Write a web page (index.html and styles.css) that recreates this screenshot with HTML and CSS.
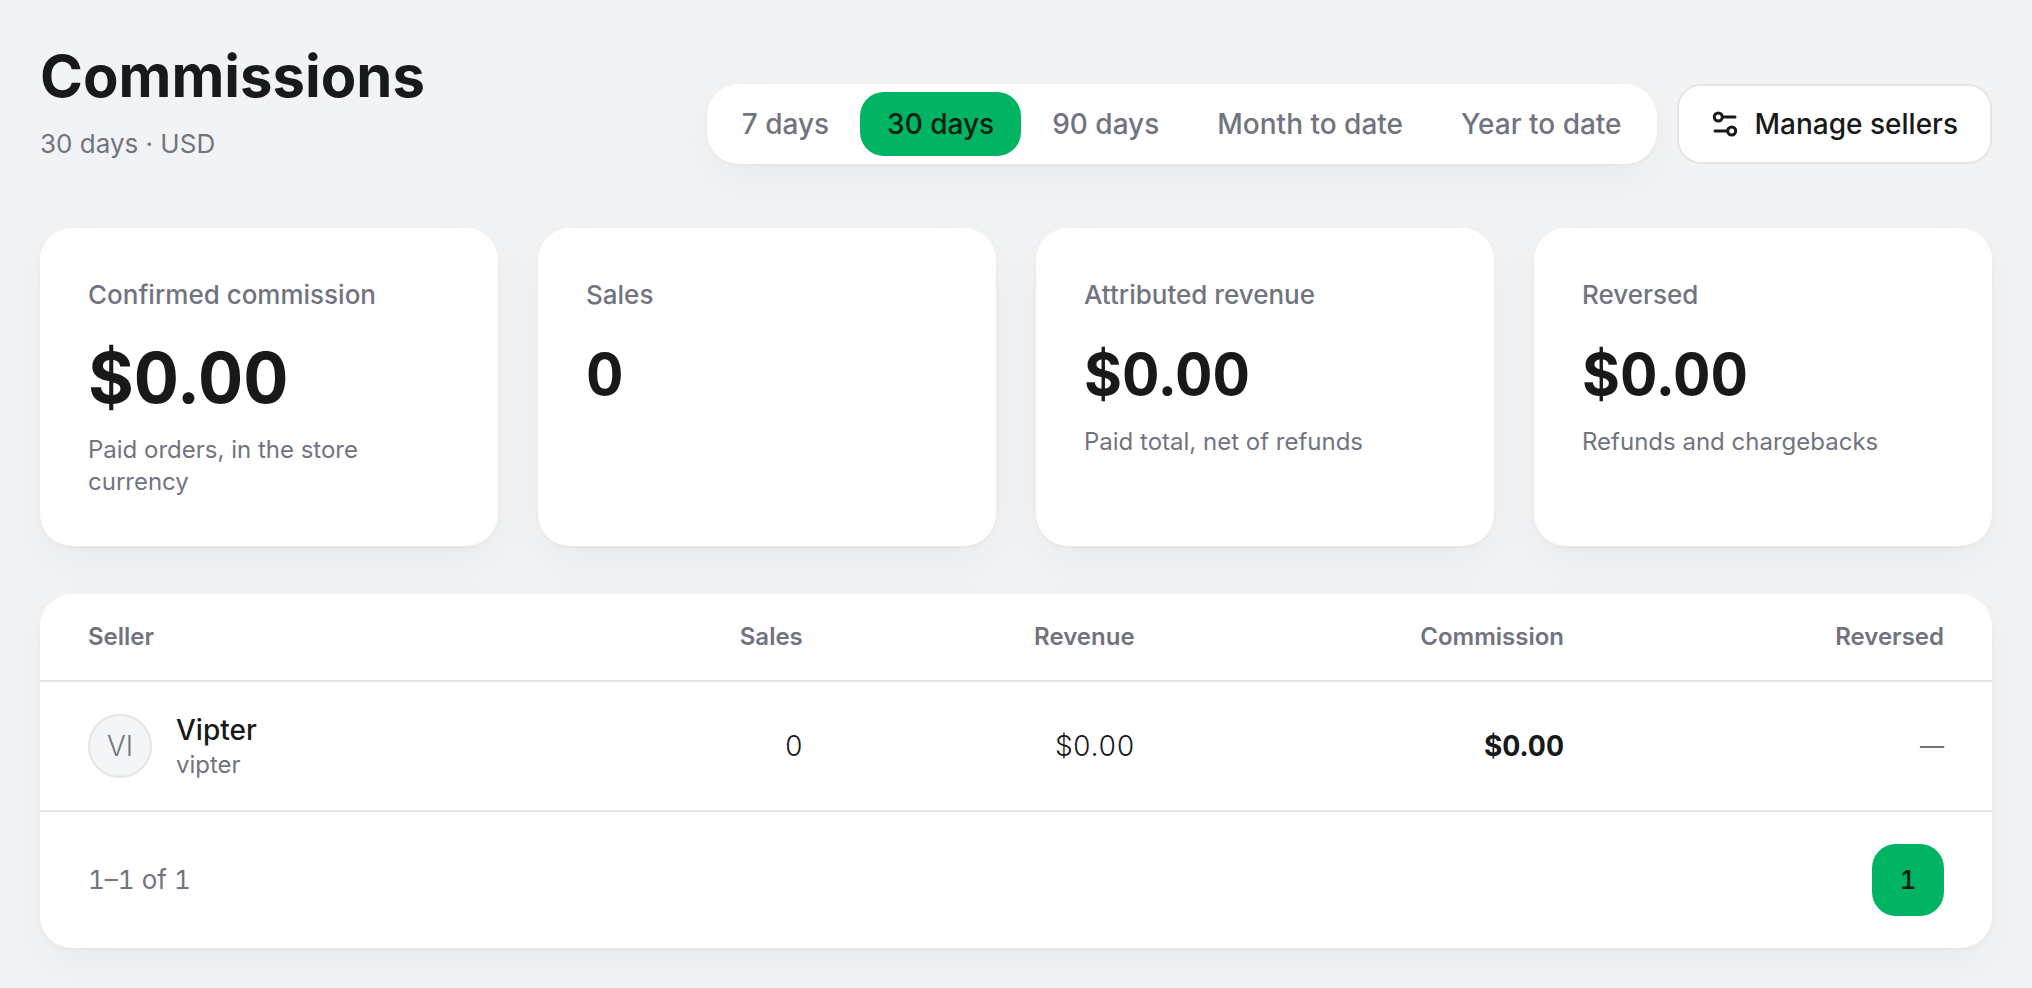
FILE: index.html
```html
<!DOCTYPE html>
<html lang="en">
<head>
    <meta charset="UTF-8">
    <meta name="viewport" content="width=device-width, initial-scale=1.0">
    <title>Commissions</title>
    <link rel="stylesheet" href="styles.css">
</head>

<body>

    <main class="page">
        <header class="page-header">
            <div class="page-title">
                <h1>Commissions</h1>
                <p>30 days · USD</p>
            </div>
            <div class="actions">
                <nav class="periods" aria-label="Period">
                    <button type="button">7 days</button>
                    <button type="button" class="active" aria-pressed="true">30 days</button>
                    <button type="button">90 days</button>
                    <button type="button">Month to date</button>
                    <button type="button">Year to date</button>
                </nav>
                <a class="manage" href="#sellers">
                    <svg class="icon" viewBox="0 0 28 28" aria-hidden="true">
                        <circle cx="7.3" cy="7" r="4" />
                        <path d="M11.5 7H24" />
                        <circle cx="20.7" cy="21" r="4" />
                        <path d="M4 21H16.5" />
                    </svg>
                    Manage sellers
                </a>
            </div>
        </header>

        <section class="stats">
            <article class="card stat stat-main">
                <h2>Confirmed commission</h2>
                <p class="value">$0.00</p>
                <p class="hint">Paid orders, in the store currency</p>
            </article>
            <article class="card stat">
                <h2>Sales</h2>
                <p class="value">0</p>
            </article>
            <article class="card stat">
                <h2>Attributed revenue</h2>
                <p class="value">$0.00</p>
                <p class="hint">Paid total, net of refunds</p>
            </article>
            <article class="card stat">
                <h2>Reversed</h2>
                <p class="value">$0.00</p>
                <p class="hint">Refunds and chargebacks</p>
            </article>
        </section>

        <section class="card" id="sellers">
            <table class="sellers">
                <thead>
                    <tr>
                        <th class="col-seller" scope="col">Seller</th>
                        <th class="col-sales" scope="col">Sales</th>
                        <th class="col-revenue" scope="col">Revenue</th>
                        <th class="col-commission" scope="col">Commission</th>
                        <th class="col-reversed" scope="col">Reversed</th>
                    </tr>
                </thead>
                <tbody>
                    <tr>
                        <td>
                            <div class="seller">
                                <span class="avatar">VI</span>
                                <div>
                                    <div class="seller-name">Vipter</div>
                                    <div class="seller-slug">vipter</div>
                                </div>
                            </div>
                        </td>
                        <td>0</td>
                        <td>$0.00</td>
                        <td class="commission">$0.00</td>
                        <td class="empty">—</td>
                    </tr>
                </tbody>
            </table>
            <footer class="pagination">
                <span>1–1 of 1</span>
                <button type="button" aria-current="page">1</button>
            </footer>
        </section>
    </main>

</body>
</html>
```

FILE: styles.css
```css
:root {
    --bg-color: #f1f3f5;
    --card-bg: #ffffff;
    --text-color: #18191b;
    --muted-color: #71747f;
    --border-color: #e4e5e6;
    --accent-color: #00b464;
    --accent-text: #06200f;
    --shadow: 0 2px 4px rgba(0, 0, 0, 0.03), 0 16px 48px rgba(0, 0, 0, 0.04);
}

* {
    box-sizing: border-box;
}

body {
    font-family: Inter, sans-serif;
    font-size: 28px;
    line-height: 40px;
    background: var(--bg-color);
    color: var(--text-color);
    margin: 0;
}

h1, h2, p {
    margin: 0;
}

button {
    font: inherit;
    border: none;
    cursor: pointer;
}

.page {
    padding: 40px;
}

/* Header */
.page-header {
    display: flex;
    justify-content: space-between;
    align-items: flex-end;
    margin-bottom: 64px;
}

.page-title h1 {
    font-size: 58px;
    font-weight: 700;
    line-height: 72px;
    margin-bottom: 12px;
}

.page-title p {
    color: var(--muted-color);
    font-size: 26px;
}

.actions {
    display: flex;
    gap: 20px;
}

.periods {
    display: flex;
    gap: 4px;
    padding: 8px;
    background: var(--card-bg);
    border-radius: 32px;
    box-shadow: var(--shadow);
}

.periods button {
    height: 64px;
    padding: 0 27px;
    border-radius: 24px;
    background: none;
    color: var(--muted-color);
    font-weight: 500;
}

.periods .active {
    background: var(--accent-color);
    color: var(--accent-text);
}

.manage {
    display: flex;
    align-items: center;
    gap: 16px;
    height: 80px;
    padding: 0 32px;
    border: 2px solid var(--border-color);
    border-radius: 24px;
    background: var(--card-bg);
    color: var(--text-color);
    font-weight: 500;
    text-decoration: none;
}

.icon {
    width: 28px;
    height: 28px;
    fill: none;
    stroke: currentColor;
    stroke-width: 3;
    stroke-linecap: round;
}

/* Cards */
.card {
    background: var(--card-bg);
    border-radius: 32px;
    box-shadow: var(--shadow);
}

.stats {
    display: grid;
    grid-template-columns: repeat(4, 1fr);
    gap: 40px;
    margin-bottom: 48px;
}

.stat {
    padding: 48px;
}

.stat h2 {
    color: var(--muted-color);
    font-size: 26px;
    font-weight: 500;
    line-height: 38px;
    margin-bottom: 24px;
}

.value {
    font-size: 58px;
    font-weight: 700;
    line-height: 72px;
    font-variant-numeric: tabular-nums;
}

.stat-main .value {
    font-size: 70px;
    line-height: 80px;
}

.hint {
    color: var(--muted-color);
    font-size: 24px;
    line-height: 32px;
    margin-top: 16px;
}

/* Sellers table */
.sellers {
    width: 100%;
    border-collapse: collapse;
    table-layout: fixed;
    font-variant-numeric: tabular-nums;
}

.sellers th, .sellers td {
    padding: 24px 18px 24px 0;
    border-bottom: 2px solid var(--border-color);
    text-align: right;
}

.sellers th {
    color: var(--muted-color);
    font-size: 24px;
    font-weight: 600;
    line-height: 38px;
}

.sellers td {
    height: 130px;
    font-weight: 300;
}

.sellers th:first-child, .sellers td:first-child {
    padding-left: 48px;
    text-align: left;
}

.sellers th:last-child, .sellers td:last-child {
    padding-right: 48px;
}

.col-seller {
    width: 23%;
}

.col-sales, .col-revenue {
    width: 17%;
}

.col-commission {
    width: 22%;
}

.sellers .commission {
    font-weight: 700;
}

.sellers .empty {
    color: var(--muted-color);
    font-size: 24px;
    font-weight: 400;
}

.seller {
    display: flex;
    align-items: center;
    gap: 24px;
}

.avatar {
    display: flex;
    align-items: center;
    justify-content: center;
    width: 64px;
    height: 64px;
    border: 2px solid var(--border-color);
    border-radius: 50%;
    background: #f4f5f7;
    color: var(--muted-color);
}

.seller-name {
    font-weight: 500;
    line-height: 38px;
}

.seller-slug {
    color: var(--muted-color);
    font-size: 24px;
    font-weight: 400;
    line-height: 32px;
}

/* Pagination */
.pagination {
    display: flex;
    justify-content: space-between;
    align-items: center;
    padding: 32px 48px;
    color: var(--muted-color);
    font-size: 26px;
    font-variant-numeric: tabular-nums;
}

.pagination button {
    width: 72px;
    height: 72px;
    border-radius: 24px;
    background: var(--accent-color);
    color: var(--accent-text);
    font-weight: 500;
}
```
